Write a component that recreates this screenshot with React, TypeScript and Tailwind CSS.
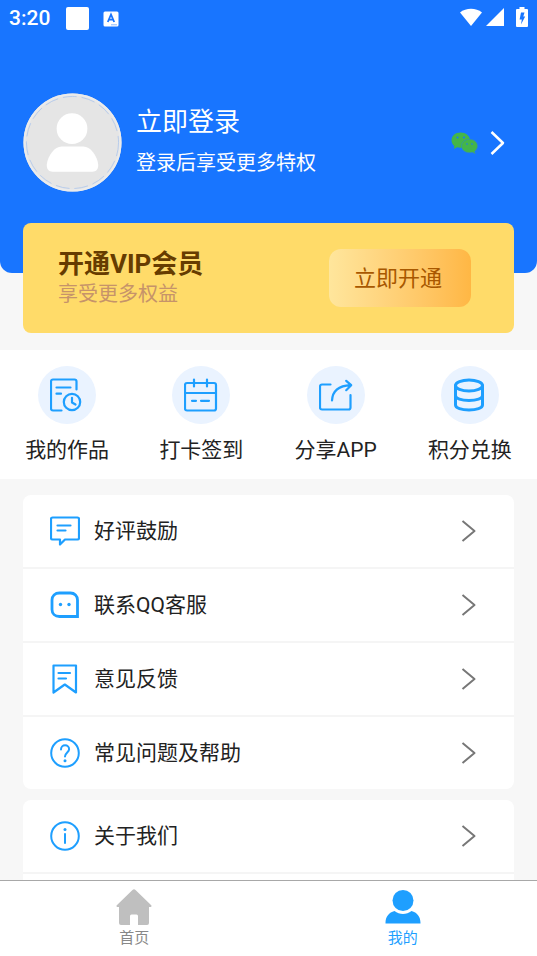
import type { ReactNode } from 'react';

type Item = { label: string; icon: ReactNode };

const stroke = {
  fill: 'none',
  stroke: 'currentColor',
  strokeWidth: 2.2,
  strokeLinecap: 'round',
  strokeLinejoin: 'round',
} as const;

const ACTIONS: Item[] = [
  {
    label: '我的作品',
    icon: (
      <svg viewBox="0 0 34 34" className="size-[34px]" {...stroke}>
        <path d="M11.500 32.500H3a2 2 0 0 1-2-2V3.500a2 2 0 0 1 2-2h21.500a2 2 0 0 1 2 2V11.500M6.500 9.500H20.500M6.500 15.700H11" />
        <circle cx="22" cy="24" r="8.200" />
        <path d="M22 19.800v4.700l3.500 2" />
      </svg>
    ),
  },
  {
    label: '打卡签到',
    icon: (
      <svg viewBox="0 0 34 34" className="size-[34px]" {...stroke}>
        <rect x="1" y="5" width="31" height="27.500" rx="2" />
        <path d="M1 15h31M10 1.500V8.500M23 1.500V8.500M8 22.800h4M17 22.800h8" />
      </svg>
    ),
  },
  {
    label: '分享APP',
    icon: (
      <svg viewBox="0 0 34 34" className="size-[34px]" {...stroke}>
        <path d="M11.500 6.500H3a2 2 0 0 0-2 2v21a2 2 0 0 0 2 2h26.500a2 2 0 0 0 2-2V17" />
        <path d="M13 22.500C13.500 14 19 7.800 31.500 7.200M27.200 2.800l5 4.400-5 5" />
      </svg>
    ),
  },
  {
    label: '积分兑换',
    icon: (
      <svg viewBox="0 0 34 34" className="size-[34px]" {...stroke} strokeWidth={3}>
        <ellipse cx="16" cy="7.500" rx="13.500" ry="5.500" />
        <path d="M2.500 7.500v19.500c0 3 6 5 13.500 5S29.500 30 29.500 27V7.500M2.500 17.500c0 3 6 5 13.500 5s13.500-2 13.500-5" />
      </svg>
    ),
  },
];

const SERVICES: Item[] = [
  {
    label: '好评鼓励',
    icon: (
      <svg viewBox="0 0 30 30" className="size-[30px]" {...stroke}>
        <path d="M3 1.500h24.500A1.500 1.500 0 0 1 29 3v19a1.500 1.500 0 0 1-1.500 1.500H15l-5 5v-5H2.500A1.500 1.500 0 0 1 1 22V3a1.500 1.500 0 0 1 1.500-1.500zM7.500 9.500h13M7.500 14.500h8" />
      </svg>
    ),
  },
  {
    label: '联系QQ客服',
    icon: (
      <svg viewBox="0 0 30 30" className="size-[30px]" {...stroke} strokeWidth={2.8} strokeLinejoin="miter">
        <path d="M9.500 3h11c4 0 7 3 7 7V26.500H9.500c-4.500 0-7.500-3-7.500-7V10c0-4 3-7 7.500-7z" />
        <circle cx="10.500" cy="14.500" r="1.700" fill="currentColor" stroke="none" />
        <circle cx="19" cy="14.500" r="1.700" fill="currentColor" stroke="none" />
      </svg>
    ),
  },
  {
    label: '意见反馈',
    icon: (
      <svg viewBox="0 0 30 30" className="size-[30px]" {...stroke}>
        <path d="M3.500 1.500H26v27L14.800 20.500 3.500 28.500zM8.500 9h11.500M8.500 14.500h7.500" />
      </svg>
    ),
  },
  {
    label: '常见问题及帮助',
    icon: (
      <svg viewBox="0 0 30 30" className="size-[30px]" {...stroke} strokeWidth={2}>
        <circle cx="15" cy="15" r="13.800" />
        <path d="M11 11.500c0-2.500 1.800-4.200 4.100-4.200s4 1.700 4 3.900c0 3-4.100 3.600-4.100 7.300" />
        <circle cx="15" cy="22.800" r="1.500" fill="currentColor" stroke="none" />
      </svg>
    ),
  },
];

const ABOUT: Item[] = [
  {
    label: '关于我们',
    icon: (
      <svg viewBox="0 0 30 30" className="size-[30px]" {...stroke} strokeWidth={2}>
        <circle cx="15" cy="15" r="13.800" />
        <path d="M15 13v9" />
        <circle cx="15" cy="8.500" r="1.500" fill="currentColor" stroke="none" />
      </svg>
    ),
  },
];

function StatusBar() {
  return (
    <div className="flex h-[37px] items-center px-[9px] text-white">
      <span className="text-[21px] font-medium">3:20</span>
      <span className="ml-4 size-[23px] rounded-xs bg-white" />
      <svg viewBox="0 0 16 16" className="ml-3.5 size-4">
        <rect x="0.500" y="0.500" width="15" height="15" rx="1.500" fill="#fff" />
        <path d="M4.800 11 8 3.500 11.200 11M6 8.600h4" fill="none" stroke="#1875ff" strokeWidth="1.800" />
        <path d="M8.500 13.800h5.500" stroke="#1875ff" strokeDasharray="1 1" />
      </svg>
      <div className="ml-auto flex items-center pb-[3px]">
        <svg viewBox="0 0 22 18" className="h-[18px] w-[22px]" fill="#fff">
          <path d="M0 4.500C6-.5 16-.5 22 4.500L11 18z" />
        </svg>
        <svg viewBox="0 0 18 18" className="ml-1 size-[18px]" fill="#fff">
          <path d="M18 0v18H0z" />
        </svg>
        <svg viewBox="0 0 12 20" className="ml-3 h-5 w-3">
          <path d="M3.500 0h5v2H11a1 1 0 0 1 1 1v16a1 1 0 0 1-1 1H1a1 1 0 0 1-1-1V3a1 1 0 0 1 1-1h2.500z" fill="#fff" />
          <path d="M5 5.500h3.500l-1.200 4h1.900L5 17.500l.8-5H3.600z" fill="#1875ff" />
        </svg>
      </div>
    </div>
  );
}

function WechatIcon() {
  return (
    <svg viewBox="0 0 27 22" className="h-[22px] w-[27px]">
      <path d="M9.500.5C4.200.5.500 4 .500 8.200c0 2.400 1.200 4.400 3 5.800L2.800 17l3.400-1.700c1 .300 2.100.500 3.300.5 5.300 0 9.500-3.400 9.500-7.600S14.800.5 9.500.5z" fill="#44b549" />
      <path d="M18.500 7.300c-4.500 0-8 2.900-8 6.700s3.500 6.700 8 6.700c1 0 2-.2 2.900-.4l2.900 1.500-.7-2.500c1.700-1.200 2.900-3.100 2.900-5.300 0-3.800-3.500-6.700-8-6.700z" fill="#44b549" stroke="#2f8cc0" strokeWidth="0.600" />
      <g fill="#1875ff">
        <circle cx="6.500" cy="5.600" r="1" />
        <circle cx="13" cy="5.600" r="1" />
        <circle cx="16" cy="12" r="0.800" />
        <circle cx="21" cy="12" r="0.800" />
      </g>
    </svg>
  );
}

function MenuRow({ label, icon }: Item) {
  return (
    <a href="#" className="flex h-[72px] items-center pl-[27px] pr-[38px]">
      <span className="text-[#1e9fff]">{icon}</span>
      <span className="ml-3.5 text-[21px] leading-7 text-[#222]">{label}</span>
      <svg viewBox="0 0 15 22" className="ml-auto h-[22px] w-[15px] text-[#777]" {...stroke} strokeWidth={2} strokeLinecap="butt">
        <path d="M1.500 1 13.500 11 1.500 21" />
      </svg>
    </a>
  );
}

export default function App() {
  return (
    <div className="flex min-h-screen flex-col bg-[#f7f7f7] font-['Roboto','Noto_Sans_CJK_SC',sans-serif]">
      <header className="rounded-b-xl bg-[#1875ff] pb-[81px]">
        <StatusBar />
        <a href="#" className="mt-14 flex items-center pl-[23px] pr-8 text-white">
          <svg viewBox="0 0 100 100" className="size-[99px]">
            <circle cx="50" cy="50" r="49.500" fill="#e5e5e5" />
            <circle cx="50" cy="50" r="48.500" fill="none" stroke="#ebebeb" strokeWidth="2" />
            <circle cx="50" cy="50" r="46.500" fill="none" stroke="#a3c1ee" strokeWidth="0.700" strokeDasharray="14 5" />
            <circle cx="49.500" cy="36" r="15.500" fill="#fff" />
            <path d="M39 54h22c7 0 14 9 15 18.500 0 5-2 7-6 7H30c-4 0-6-2-6-7C25 63 32 54 39 54z" fill="#fff" />
          </svg>
          <div className="ml-3.5">
            <p className="text-[26px] leading-10">立即登录</p>
            <p className="text-xl leading-[42px]">登录后享受更多特权</p>
          </div>
          <div className="ml-auto flex items-center gap-3">
            <WechatIcon />
            <svg viewBox="0 0 15 24" className="h-6 w-[15px]" {...stroke} strokeWidth={2.5} strokeLinecap="butt">
              <path d="M1.500 1 13 12 1.500 23" />
            </svg>
          </div>
        </a>
      </header>

      <section className="mx-[23px] -mt-[50px] flex h-[110px] items-center justify-between rounded-lg bg-[#ffdb69] pl-[35px] pr-[43px]">
        <div>
          <h2 className="text-[26px] leading-8 font-bold text-[#663c00]">开通VIP会员</h2>
          <p className="text-xl leading-7 text-[#c6936a]">享受更多权益</p>
        </div>
        <button
          type="button"
          className="h-[58px] w-[142px] rounded-xl bg-linear-to-r from-[#ffe69c] to-[#ffb744] pr-1 text-[22px] text-[#a85800]"
        >
          立即开通
        </button>
      </section>

      <section className="mt-[17px] grid grid-cols-4 bg-white pt-4 pb-[15px]">
        {ACTIONS.map((item) => (
          <a key={item.label} href="#" className="flex flex-col items-center gap-3">
            <span className="flex size-[58px] items-center justify-center rounded-full bg-[#eaf3ff] text-[#1e9fff]">
              {item.icon}
            </span>
            <span className="text-[21px] leading-7 text-[#222]">{item.label}</span>
          </a>
        ))}
      </section>

      <ul className="mx-[23px] mt-4 divide-y-2 divide-[#f5f5f5] rounded-lg bg-white">
        {SERVICES.map((item) => (
          <li key={item.label}>
            <MenuRow {...item} />
          </li>
        ))}
      </ul>

      <ul className="mx-[23px] mt-[11px] grow rounded-t-lg bg-white">
        {ABOUT.map((item) => (
          <li key={item.label} className="border-b-2 border-[#f5f5f5]">
            <MenuRow {...item} />
          </li>
        ))}
      </ul>

      <nav className="sticky bottom-0 grid grid-cols-2 border-t border-[#a8a8a8] bg-white pt-2 pb-2 text-[15px] leading-5">
        <a href="#" className="flex flex-col items-center gap-[3px] text-[#888]">
          <svg viewBox="0 0 36 36" className="size-9" fill="#bfbfbf">
            <path d="M16.500 1a2 2 0 0 1 3 0L35 16c1 1 .5 2-1 2h-1v16a2 2 0 0 1-2 2h-9V27a1.500 1.500 0 0 0-1.500-1.500h-5A1.500 1.500 0 0 0 14 27v9H5a2 2 0 0 1-2-2V18H2c-1.500 0-2-1-1-2z" />
          </svg>
          首页
        </a>
        <a href="#" aria-current="page" className="flex flex-col items-center gap-[3px] text-[#1e9fff]">
          <svg viewBox="0 0 36 36" className="size-9" fill="currentColor">
            <circle cx="18" cy="11.500" r="10.500" />
            <path d="M9.500 22c5 4 12 4 17 0 5.500 1.500 9 5.500 9 12v.5H.500V34c0-6.500 3.500-10.500 9-12z" />
          </svg>
          我的
        </a>
      </nav>
    </div>
  );
}
